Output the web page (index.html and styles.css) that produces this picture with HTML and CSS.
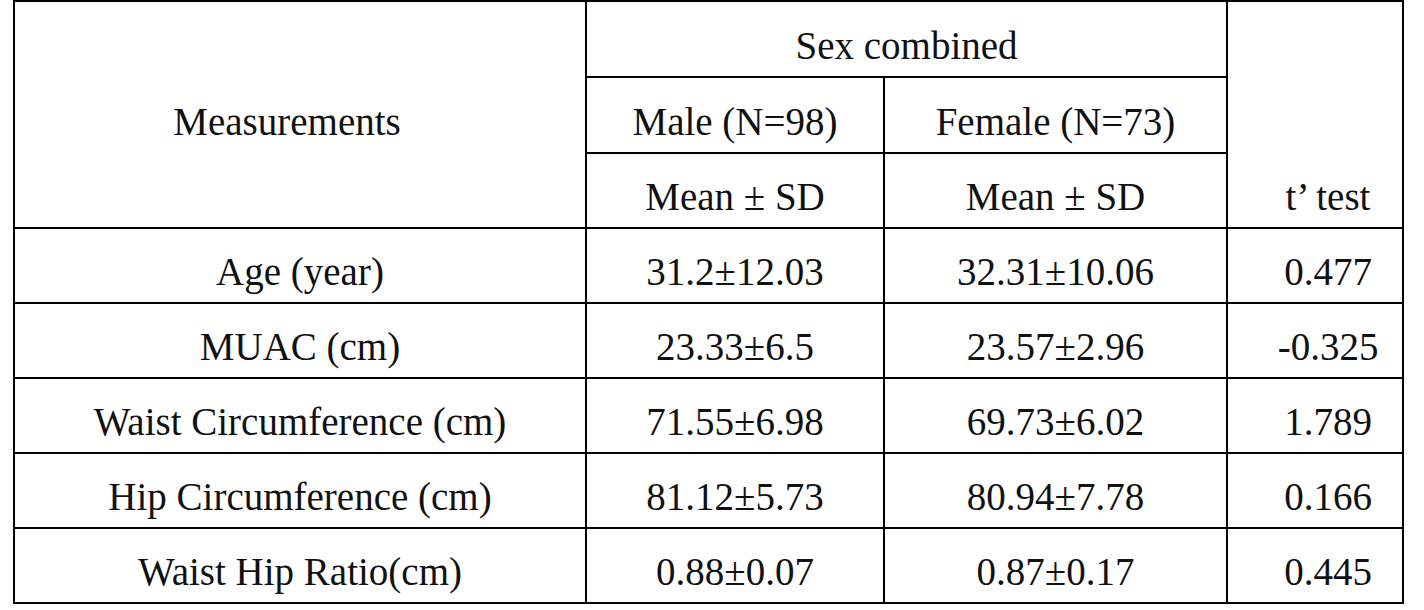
FILE: index.html
```html
<!DOCTYPE html>
<html>
<head>
<meta charset="utf-8">
<link rel="stylesheet" href="styles.css">
</head>
<body>
<table class="stats">
  <colgroup>
    <col class="c-meas">
    <col class="c-male">
    <col class="c-female">
    <col class="c-t">
  </colgroup>
  <tr class="tall">
    <td rowspan="3" class="meas-head">Measurements</td>
    <td colspan="2">Sex combined</td>
    <td rowspan="3" class="t-col">t’ test</td>
  </tr>
  <tr class="tall">
    <td>Male (N=98)</td>
    <td>Female (N=73)</td>
  </tr>
  <tr>
    <td>Mean ± SD</td>
    <td>Mean ± SD</td>
  </tr>
  <tr>
    <td>Age (year)</td>
    <td>31.2±12.03</td>
    <td>32.31±10.06</td>
    <td class="t-col">0.477</td>
  </tr>
  <tr>
    <td>MUAC (cm)</td>
    <td>23.33±6.5</td>
    <td>23.57±2.96</td>
    <td class="t-col">-0.325</td>
  </tr>
  <tr>
    <td>Waist Circumference (cm)</td>
    <td>71.55±6.98</td>
    <td>69.73±6.02</td>
    <td class="t-col">1.789</td>
  </tr>
  <tr>
    <td>Hip Circumference (cm)</td>
    <td>81.12±5.73</td>
    <td>80.94±7.78</td>
    <td class="t-col">0.166</td>
  </tr>
  <tr>
    <td>Waist Hip Ratio(cm)</td>
    <td>0.88±0.07</td>
    <td>0.87±0.17</td>
    <td class="t-col">0.445</td>
  </tr>
</table>
</body>
</html>
```
FILE: styles.css
```css
html, body {
  margin: 0;
  padding: 0;
  background: #ffffff;
}

body {
  padding: 0 0 0 13px;
  font-family: "Liberation Serif", "Times New Roman", serif;
  color: #111111;
}

.stats {
  border-collapse: collapse;
  table-layout: fixed;
  width: 1389px;
  font-size: 39px;
  line-height: 44px;
}

.c-meas { width: 572px; }
.c-male { width: 298px; }
.c-female { width: 343px; }
.c-t { width: 176px; }

.stats td {
  border: 2px solid #000000;
  text-align: center;
  vertical-align: bottom;
  padding: 0 0 8px 0;
  height: 75px;
  box-sizing: border-box;
  white-space: nowrap;
}

.stats tr.tall > td {
  height: 76px;
}

.stats td.meas-head {
  vertical-align: middle;
  padding: 14px 26px 0 0;
}

.stats td.t-col {
  padding-left: 26px;
}
```
